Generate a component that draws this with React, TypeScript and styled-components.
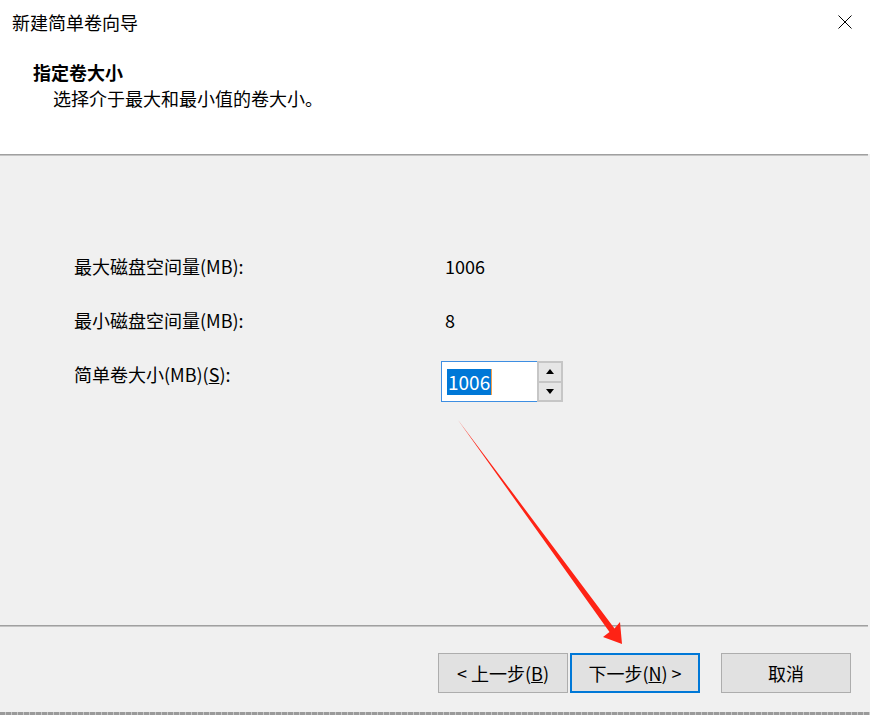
import styled, { createGlobalStyle } from "styled-components"

const GlobalStyle = createGlobalStyle`
    html, body {
        margin: 0;
        padding: 0;
        background: #ffffff;
    }
    body {
        font-family: "Noto Sans CJK SC", "Liberation Sans", sans-serif;
        color: #000;
    }
`

const Window = styled.div`
    position: relative;
    width: 870px;
    height: 715px;
    display: flex;
    flex-direction: column;
    background: #f0f0f0;
    overflow: hidden;
`

const TitleBar = styled.div`
    height: 44px;
    display: flex;
    align-items: center;
    justify-content: space-between;
    padding: 0 13px 0 12px;
    background: #fff;
    font-size: 18px;
`

const CloseButton = styled.div`
    width: 14px;
    height: 14px;
    margin-right: 5px;
    display: flex;
`

const Header = styled.div`
    height: 110px;
    box-sizing: border-box;
    padding: 16px 0 0 33px;
    background: #fff;
`

const HeaderTitle = styled.div`
    font-size: 18px;
    font-weight: 700;
    line-height: 25px;
`

const HeaderSub = styled.div`
    font-size: 18px;
    line-height: 26px;
    padding-left: 20px;
`

const Separator = styled.div`
    height: 2px;
    margin-right: 2px;
    border-top: 1px solid #a0a0a0;
    border-bottom: 1px solid #c4c4c4;
    box-sizing: border-box;
`

const Body = styled.div`
    flex: 1;
    padding: 83px 0 0 74px;
    display: flex;
    flex-direction: column;
`

const Row = styled.div<{ $align?: string }>`
    height: 54px;
    display: grid;
    grid-template-columns: 367px auto;
    align-items: ${({ $align }) => $align || "center"};
    font-size: 18px;
`

const Label = styled.span`
    align-self: center;
`

const Value = styled.span`
    padding-left: 4px;
`

const SpinBox = styled.div`
    display: flex;
    height: 41px;
    margin-bottom: -1px;
`

const SpinInput = styled.div`
    width: 90px;
    border: 1px solid #3d8ee2;
    border-right: none;
    background: #fff;
    display: flex;
    align-items: center;
    padding-left: 5px;
`

const Selection = styled.span`
    background: #0078d7;
    color: #fff;
    font-size: 19px;
    line-height: 26px;
    padding: 0 1px;
    border-right: 1px solid #f0a050;
`

const SpinButtons = styled.div`
    width: 22px;
    border: 2px solid #c6c6c6;
    display: flex;
    flex-direction: column;
    background: #c6c6c6;
    gap: 2px;
`

const SpinArrow = styled.div`
    flex: 1;
    background: #e6e6e6;
    display: flex;
    align-items: center;
    justify-content: center;
`

const Footer = styled.div`
    height: 85px;
    box-sizing: border-box;
    padding: 26px 19px 0 0;
    display: flex;
    justify-content: flex-end;
    align-items: flex-start;
`

const ButtonPair = styled.div`
    display: flex;
    gap: 2px;
    margin-right: 21px;
`

const Button = styled.button<{ $focused?: boolean }>`
    width: 130px;
    height: 40px;
    box-sizing: border-box;
    font-family: inherit;
    font-size: 18px;
    color: #000;
    background: #e1e1e1;
    border: ${({ $focused }) => ($focused ? "2px solid #0078d7" : "1px solid #adadad")};
    padding: 0;
`

const BottomEdge = styled.div`
    height: 3px;
    background: repeating-linear-gradient(90deg, #9a9a9a 0 5px, #c8c8c8 5px 6px);
`

const Overlay = styled.svg`
    position: absolute;
    left: 0;
    top: 0;
    pointer-events: none;
`

export default function App() {
    return (
        <Window>
            <GlobalStyle />
            <TitleBar>
                <span>新建简单卷向导</span>
                <CloseButton>
                    <svg width="14" height="14" viewBox="0 0 14 14">
                        <path d="M0.5 0.5 L13.5 13.5 M13.5 0.5 L0.5 13.5" stroke="#000" strokeWidth="1" fill="none" />
                    </svg>
                </CloseButton>
            </TitleBar>
            <Header>
                <HeaderTitle>指定卷大小</HeaderTitle>
                <HeaderSub>选择介于最大和最小值的卷大小。</HeaderSub>
            </Header>
            <Separator />
            <Body>
                <Row>
                    <Label>最大磁盘空间量(MB):</Label>
                    <Value>1006</Value>
                </Row>
                <Row>
                    <Label>最小磁盘空间量(MB):</Label>
                    <Value>8</Value>
                </Row>
                <Row $align="end">
                    <Label>简单卷大小(MB)(<u>S</u>):</Label>
                    <SpinBox>
                        <SpinInput>
                            <Selection>1006</Selection>
                        </SpinInput>
                        <SpinButtons>
                            <SpinArrow>
                                <svg width="8" height="5" viewBox="0 0 8 5"><path d="M4 0 L8 5 L0 5 Z" fill="#000" /></svg>
                            </SpinArrow>
                            <SpinArrow>
                                <svg width="8" height="5" viewBox="0 0 8 5"><path d="M0 0 L8 0 L4 5 Z" fill="#000" /></svg>
                            </SpinArrow>
                        </SpinButtons>
                    </SpinBox>
                </Row>
            </Body>
            <Separator />
            <Footer>
                <ButtonPair>
                    <Button>&lt; 上一步(<u>B</u>)</Button>
                    <Button $focused>下一步(<u>N</u>) &gt;</Button>
                </ButtonPair>
                <Button>取消</Button>
            </Footer>
            <BottomEdge />
            <Overlay width="870" height="715" viewBox="0 0 870 715">
                <polygon
                    points="458,420 614.5,628.5 620,622 622,644 603,637 609.5,632"
                    fill="#fe2315"
                />
            </Overlay>
        </Window>
    )
}
